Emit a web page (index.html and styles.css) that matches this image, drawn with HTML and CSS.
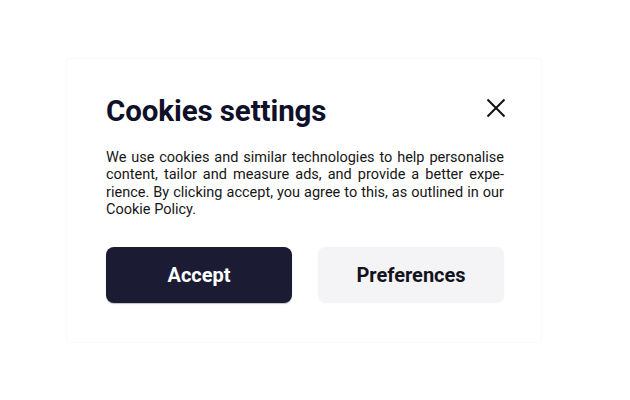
FILE: index.html
```html
<!DOCTYPE html>
<html lang="en">
<head>
<meta charset="utf-8">
<title>Cookies settings</title>
<link rel="stylesheet" href="styles.css">
</head>
<body>
<div class="page">
  <section class="card">
    <header class="head">
      <h1 class="title">Cookies settings</h1>
      <button class="close" aria-label="Close">
        <svg width="20" height="20" viewBox="0 0 20 20"><path d="M1.5 1.5 L18.5 18.5 M18.5 1.5 L1.5 18.5" stroke="#111" stroke-width="2" fill="none"/></svg>
      </button>
    </header>
    <p class="text">We use cookies and similar technologies to help personalise content, tailor and measure ads, and provide a better expe&shy;rience. By clicking accept, you agree to this, as outlined in our Cookie Policy.</p>
    <div class="actions">
      <button class="btn btn-primary">Accept</button>
      <button class="btn btn-secondary">Preferences</button>
    </div>
  </section>
</div>
</body>
</html>
```
FILE: styles.css
```css
* { box-sizing: border-box; }
html, body { margin: 0; padding: 0; background: #fff; }
body { font-family: Roboto, "Liberation Sans", Arial, sans-serif; width: 630px; height: 400px; overflow: hidden; }
.page { padding: 58px 0 0 66px; }
.card {
  width: 476px;
  padding: 35px 37px 39px 39px;
  border: 1px solid #fafafb;
  border-radius: 4px;
}
.head { display: flex; justify-content: space-between; align-items: flex-start; }
.title {
  margin: 0;
  font-size: 29.5px;
  line-height: 34px;
  font-weight: 700;
  color: #10102a;
  letter-spacing: -0.1px;
}
.close {
  border: 0; background: none; padding: 0; margin: 4px -2px 0 0;
  width: 20px; height: 20px; display: block;
}
.close svg { display: block; }
.text {
  margin: 21px 0 0 0;
  font-size: 14.5px;
  line-height: 17.4px;
  color: #161616;
  text-align: justify;
  hyphens: manual;
}
.actions { display: flex; gap: 26px; margin-top: 28px; }
.btn {
  width: 186px; height: 56px;
  border: 0; border-radius: 8px;
  font-family: Roboto, "Liberation Sans", Arial, sans-serif;
  font-size: 20px; font-weight: 700;
}
.btn-primary { background: #1b1b33; color: #fff; box-shadow: 0 1px 1px rgba(0,0,0,0.25); }
.btn-secondary { background: #f4f4f7; color: #141420; box-shadow: 0 0 2px rgba(0,0,0,0.04); }
```
